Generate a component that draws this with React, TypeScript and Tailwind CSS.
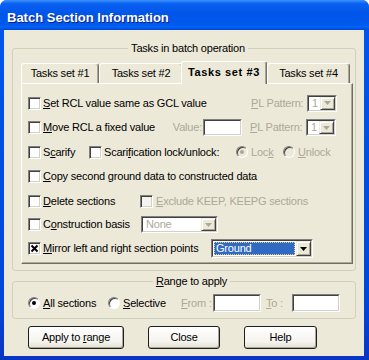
import React from "react";

const GRAY = "text-[#ACA899]";

function U({ children }: { children: React.ReactNode }) {
  return <span className="underline underline-offset-[1px]">{children}</span>;
}

function Check({ checked = false, disabled = false }: { checked?: boolean; disabled?: boolean }) {
  return (
    <div
      className={`flex h-[13px] w-[13px] shrink-0 items-center justify-center border border-t-[#808080] border-l-[#808080] border-r-white border-b-white shadow-[inset_1px_1px_0_#404040,inset_-1px_-1px_0_#D4D0C8] ${
        disabled ? "bg-[#F4F3EE]" : "bg-white"
      }`}
    >
      {checked && (
        <svg width="9" height="9" viewBox="0 0 9 9">
          <path d="M1.5 1.5 L7.5 7.5 M7.5 1.5 L1.5 7.5" stroke="#000" strokeWidth="2" />
        </svg>
      )}
    </div>
  );
}

function Radio({ checked = false, disabled = false }: { checked?: boolean; disabled?: boolean }) {
  return (
    <div
      className={`flex h-[12px] w-[12px] shrink-0 items-center justify-center rounded-full border border-t-[#808080] border-l-[#808080] border-r-white border-b-white shadow-[inset_1px_1px_0_#404040] ${
        disabled ? "bg-[#ECE9D8]" : "bg-white"
      }`}
    >
      {checked && (
        <div className={`h-[4px] w-[4px] rounded-full ${disabled ? "bg-[#ACA899]" : "bg-black"}`} />
      )}
    </div>
  );
}

function Sunken({ className, children }: { className: string; children?: React.ReactNode }) {
  return (
    <div className={`shrink-0 border border-t-[#808080] border-l-[#808080] border-r-white border-b-white ${className}`}>
      <div className="flex h-full w-full border border-t-[#404040] border-l-[#404040] border-r-[#D4D0C8] border-b-[#D4D0C8]">
        {children}
      </div>
    </div>
  );
}

function Arrow({ disabled }: { disabled?: boolean }) {
  return (
    <div className="flex h-full w-[15px] items-center justify-center border border-t-[#F1EFE2] border-l-[#F1EFE2] border-r-[#404040] border-b-[#404040] bg-[#ECE9D8] shadow-[inset_1px_1px_0_#fff,inset_-1px_-1px_0_#ACA899]">
      <svg width="7" height="4" viewBox="0 0 7 4">
        <polygon points="0,0 7,0 3.5,4" fill={disabled ? "#ACA899" : "#000"} />
      </svg>
    </div>
  );
}

function Combo({ w, h, value, disabled, selected }: { w: string; h: string; value: string; disabled?: boolean; selected?: boolean }) {
  return (
    <Sunken className={`${w} ${h} bg-white`}>
      <div className="flex flex-1 items-center overflow-hidden p-[1px]">
        {selected ? (
          <div className="flex h-full flex-1 items-center border border-dotted border-[#E6D36A] bg-[#316AC5] pl-[1px] text-white">
            {value}
          </div>
        ) : (
          <span className={`pl-[2px] ${disabled ? GRAY : ""}`}>{value}</span>
        )}
      </div>
      <Arrow disabled={disabled} />
    </Sunken>
  );
}

function Tab({ label, w, active }: { label: string; w: string; active?: boolean }) {
  return (
    <div
      className={`flex items-center justify-center rounded-t-[3px] border-t border-l border-r border-t-white border-l-white border-r-[#716F64] shadow-[inset_-1px_0_0_#ACA899] ${w} ${
        active
          ? "relative z-10 -mb-[1px] -ml-[2px] h-[23px] bg-[#ECE9D8] pb-[1px] font-bold tracking-[0.6px]"
          : "h-[20px]"
      }`}
    >
      {label}
    </div>
  );
}

export default function App() {
  return (
    <div className="h-[360px] w-[369px] bg-white font-[Tahoma,'Liberation_Sans',sans-serif] text-[11px] leading-[13px] tracking-[-0.2px] text-black">
      <div className="flex h-full flex-col rounded-t-[7px] bg-[linear-gradient(to_bottom,#0058EE,#0047D8_85%,#0A35C4)]">
        <div className="flex h-[30px] items-center rounded-t-[7px] bg-[linear-gradient(to_bottom,#3C93FF_0%,#0A61F0_12%,#0055E8_45%,#0058EC_80%,#0163F6_90%,#0047D6_100%)] pl-[7px] pt-[4px] font-['Liberation_Sans',sans-serif] text-[13px] font-bold tracking-normal text-white [text-shadow:1px_1px_#0B1E8C]">
          Batch Section Information
        </div>

        <div className="mb-[4px] ml-[4px] mr-[5px] flex flex-1 flex-col bg-[#ECE9D8]">
          <fieldset className="mx-[8px] mt-[12px] rounded-[3px] border border-[#D0D0BF] pb-[6px] pl-[8px] pt-[6px]">
            <legend className="mx-auto px-[3px] leading-[13px]">Tasks in batch operation</legend>

            <div className="flex h-[22px] items-end">
              <Tab label="Tasks set #1" w="w-[78px]" />
              <Tab label="Tasks set #2" w="w-[84px]" />
              <Tab label="Tasks set #3" w="w-[86px]" active />
              <Tab label="Tasks set #4" w="w-[83px]" />
            </div>

            <div className="h-[181px] w-[332px] border border-t-white border-l-white border-r-[#716F64] border-b-[#716F64] pl-[6px] pt-[7px] shadow-[inset_-1px_-1px_0_#ACA899]">
              <div className="flex h-[24px] items-center">
                <div className="flex w-[223px] items-center">
                  <Check />
                  <span className="ml-[2px]">
                    <U>S</U>et RCL value same as GCL value
                  </span>
                </div>
                <span className={`w-[56px] ${GRAY}`}>
                  <U>P</U>L Pattern:
                </span>
                <Combo w="w-[30px]" h="h-[17px]" value="1" disabled />
              </div>

              <div className="flex h-[25px] items-center">
                <div className="flex w-[143px] items-center">
                  <Check />
                  <span className="ml-[2px]">
                    <U>M</U>ove RCL a fixed value
                  </span>
                </div>
                <span className={`w-[32px] pr-[1px] text-right ${GRAY}`}>Value:</span>
                <Sunken className="h-[17px] w-[39px] bg-white" />
                <span className={`ml-[8px] w-[56px] ${GRAY}`}>
                  <U>P</U>L Pattern:
                </span>
                <Combo w="w-[30px]" h="h-[17px]" value="1" disabled />
              </div>

              <div className="flex h-[24px] items-center">
                <div className="flex w-[61px] items-center">
                  <Check />
                  <span className="ml-[2px]">
                    S<U>c</U>arify
                  </span>
                </div>
                <div className="flex w-[147px] items-center">
                  <Check />
                  <span className="ml-[2px]">
                    Scari<U>f</U>ication lock/unlock:
                  </span>
                </div>
                <div className="flex w-[47px] items-center">
                  <Radio checked disabled />
                  <span className={`ml-[3px] ${GRAY}`}>
                    Loc<U>k</U>
                  </span>
                </div>
                <div className="flex items-center">
                  <Radio disabled />
                  <span className={`ml-[3px] ${GRAY}`}>
                    <U>U</U>nlock
                  </span>
                </div>
              </div>

              <div className="flex h-[25px] items-center">
                <Check />
                <span className="ml-[2px]">
                  <U>C</U>opy second ground data to constructed data
                </span>
              </div>

              <div className="flex h-[24px] items-center">
                <div className="flex w-[112px] items-center">
                  <Check />
                  <span className="ml-[2px]">
                    <U>D</U>elete sections
                  </span>
                </div>
                <Check disabled />
                <span className={`ml-[3px] ${GRAY}`}>
                  <U>E</U>xclude KEEP, KEEPG sections
                </span>
              </div>

              <div className="flex h-[23px] items-center">
                <div className="flex w-[113px] items-center">
                  <Check />
                  <span className="ml-[2px]">
                    C<U>o</U>nstruction basis
                  </span>
                </div>
                <Combo w="w-[77px]" h="h-[17px]" value="None" disabled />
              </div>

              <div className="flex h-[25px] items-center">
                <div className="flex w-[183px] items-center">
                  <Check checked />
                  <span className="ml-[2px]">
                    <U>M</U>irror left and right section points
                  </span>
                </div>
                <Combo w="w-[102px]" h="h-[19px]" value="Ground" selected />
              </div>
            </div>
          </fieldset>

          <fieldset className="mx-[8px] mt-[4px] rounded-[3px] border border-[#D0D0BF] pb-[5px] pl-[15px] pt-[5px]">
            <legend className="mx-auto px-[3px] leading-[13px]">
              <U>R</U>ange to apply
            </legend>
            <div className="flex h-[20px] items-center">
              <div className="flex w-[80px] items-center">
                <Radio checked />
                <span className="ml-[3px]">
                  <U>A</U>ll sections
                </span>
              </div>
              <div className="flex w-[73px] items-center">
                <Radio />
                <span className="ml-[3px]">
                  <U>S</U>elective
                </span>
              </div>
              <span className={`w-[32px] ${GRAY}`}>
                <U>F</U>rom :
              </span>
              <Sunken className="h-[18px] w-[48px] bg-white" />
              <span className={`ml-[5px] w-[26px] ${GRAY}`}>
                <U>T</U>o :
              </span>
              <Sunken className="h-[18px] w-[48px] bg-white" />
            </div>
          </fieldset>

          <div className="mt-[7px] flex gap-[24px] pl-[24px]">
            {[
              { label: <span>Apply to <U>r</U>ange</span>, w: "w-[96px]" },
              { label: <span>Close</span>, w: "w-[72px]" },
              { label: <span>Help</span>, w: "w-[73px]" },
            ].map((b, i) => (
              <button
                key={i}
                className={`flex h-[23px] items-center justify-center rounded-[3px] border border-[#1E1E1E] bg-[linear-gradient(to_bottom,#FFFFFF,#F4F3EE_70%,#E3E0D2)] shadow-[inset_-1px_-1px_0_#ACA899] ${b.w}`}
              >
                {b.label}
              </button>
            ))}
          </div>
        </div>
      </div>
    </div>
  );
}
